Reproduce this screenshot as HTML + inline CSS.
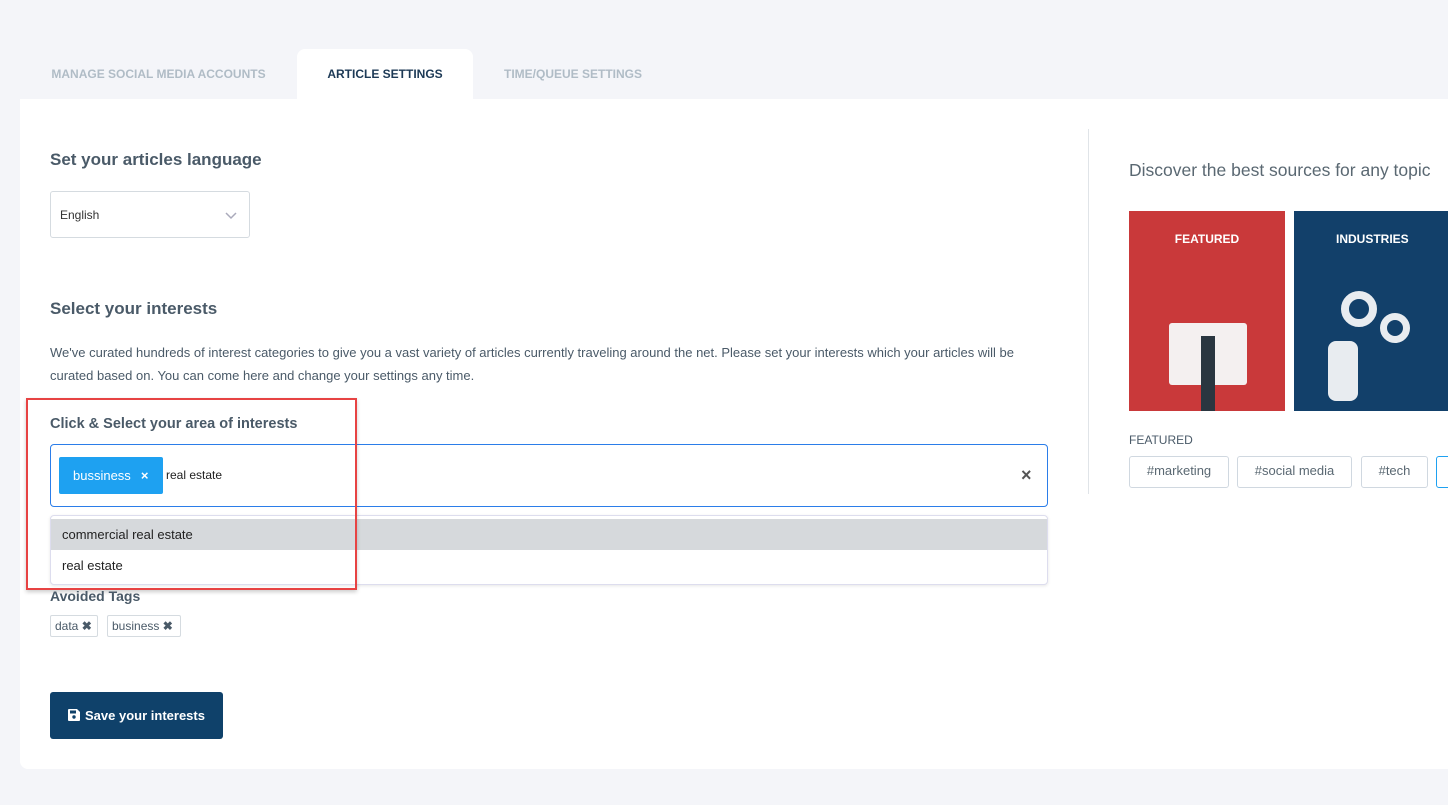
<!DOCTYPE html>
<html><head><style>
body{margin:0;width:1448px;height:805px;background:#f4f5f9;font-family:"Liberation Sans",sans-serif;position:relative;overflow:hidden;color:#4a5a68}
.abs{position:absolute}
.tab{position:absolute;top:49px;height:50px;line-height:50px;font-size:12px;font-weight:bold;text-align:center}
.card{position:absolute;left:20px;top:99px;width:1440px;height:670px;background:#fff;border-radius:0 0 8px 8px}
h3{margin:0;font-size:17px;font-weight:bold;color:#4a5a68;position:absolute}
.tag{position:absolute;top:456px;height:30px;border:1px solid #d0d8e0;border-radius:3px;font-size:13px;color:#5a6872;line-height:28px;text-align:center}
</style></head><body>
<div class="tab" style="left:20px;width:277px;color:#b0bcc6">MANAGE SOCIAL MEDIA ACCOUNTS</div>
<div class="tab" style="left:297px;width:176px;background:#fff;border-radius:8px 8px 0 0;color:#1d3a56">ARTICLE SETTINGS</div>
<div class="tab" style="left:473px;width:200px;color:#b0bcc6">TIME/QUEUE SETTINGS</div>
<div class="card"></div>
<h3 style="left:50px;top:150px">Set your articles language</h3>
<div class="abs" style="left:50px;top:191px;font-size:12px;color:#333;line-height:47px;padding-left:9px;box-sizing:border-box;width:200px;height:47px;border:1px solid #d5dbe0;border-radius:3px">English<svg class="abs" style="left:174px;top:20px" width="12" height="8"><path d="M1 1l5 5 5-5" stroke="#aab" fill="none" stroke-width="1.5"/></svg></div>
<h3 style="left:50px;top:299px">Select your interests</h3>
<div class="abs" style="left:50px;top:341px;width:990px;font-size:13px;line-height:23px;color:#4a5a68">We've curated hundreds of interest categories to give you a vast variety of articles currently traveling around the net. Please set your interests which your articles will be curated based on. You can come here and change your settings any time.</div>
<div class="abs" style="left:50px;top:416px;font-size:14.5px;font-weight:bold">Click &amp; Select your area of interests</div>
<div class="abs" style="left:50px;top:444px;width:998px;height:63px;border:1px solid #2b7de9;border-radius:4px;box-sizing:border-box"></div>
<div class="abs" style="left:59px;top:457px;width:104px;height:37px;background:#1ea1f1;border-radius:2px;color:#fff;font-size:13px;line-height:37px;padding-left:14px;box-sizing:border-box">bussiness<span style="margin-left:10px;font-weight:bold">×</span></div>
<div class="abs" style="left:166px;top:468px;font-size:12px;color:#222">real estate</div>
<div class="abs" style="left:1021px;top:465px;font-size:18px;color:#555;font-weight:bold">×</div>
<div class="abs" style="left:50px;top:515px;width:998px;height:70px;border:1px solid #dde;border-radius:4px;box-sizing:border-box;background:#fff;box-shadow:0 1px 3px rgba(0,0,0,.1)"></div>
<div class="abs" style="left:51px;top:519px;width:996px;height:31px;background:#d6d9dc"></div>
<div class="abs" style="left:62px;top:527px;font-size:13px;color:#222">commercial real estate</div>
<div class="abs" style="left:62px;top:558px;font-size:13px;color:#222">real estate</div>
<div class="abs" style="left:26px;top:398px;width:327px;height:188px;border:2px solid #e74343;box-shadow:0 2px 4px rgba(0,0,0,.2)"></div>
<div class="abs" style="left:50px;top:588px;font-size:14px;font-weight:bold">Avoided Tags</div>
<div class="abs" style="left:50px;top:615px;height:20px;border:1px solid #d5dbe0;border-radius:2px;font-size:12px;line-height:20px;padding:0 5px 0 4px">data <b>✖</b></div>
<div class="abs" style="left:107px;top:615px;height:20px;border:1px solid #d5dbe0;border-radius:2px;font-size:12px;line-height:20px;padding:0 7px 0 4px">business <b>✖</b></div>
<div class="abs" style="left:50px;top:692px;width:173px;height:47px;background:#0f416a;border-radius:3px;color:#fff;font-size:13px;font-weight:bold;line-height:47px;text-align:center"><svg width="12" height="12" viewBox="0 0 12 12" style="vertical-align:-1px;margin-right:5px"><path d="M0 1a1 1 0 0 1 1-1h8l3 3v8a1 1 0 0 1-1 1H1a1 1 0 0 1-1-1z" fill="#fff"/><rect x="2" y="1.5" width="6" height="3" fill="#0f416a"/><circle cx="6" cy="8" r="1.7" fill="#0f416a"/></svg>Save your interests</div>
<div class="abs" style="left:1088px;top:129px;width:1px;height:365px;background:#e0e4e8"></div>
<div class="abs" style="left:1129px;top:160px;font-size:17.5px;color:#5a6872">Discover the best sources for any topic</div>
<div class="abs" style="left:1129px;top:211px;width:156px;height:200px;background:#c9393a;color:#fff;font-size:12px;font-weight:bold;text-align:center;padding-top:21px;box-sizing:border-box">FEATURED
<div class="abs" style="left:40px;top:112px;width:78px;height:62px;background:#f4f0f0;border-radius:3px"></div>
<div class="abs" style="left:72px;top:125px;width:14px;height:75px;background:#2a3640"></div></div>
<div class="abs" style="left:1294px;top:211px;width:160px;height:200px;background:#12406a;color:#fff;font-size:12px;font-weight:bold;text-align:left;padding:21px 0 0 42px;box-sizing:border-box">INDUSTRIES
<div class="abs" style="left:47px;top:80px;width:36px;height:36px;border:8px solid #e8ecf0;border-radius:50%;box-sizing:border-box"></div>
<div class="abs" style="left:86px;top:102px;width:30px;height:30px;border:7px solid #e8ecf0;border-radius:50%;box-sizing:border-box"></div>
<div class="abs" style="left:34px;top:130px;width:30px;height:60px;background:#e8ecf0;border-radius:8px"></div></div>
<div class="abs" style="left:1129px;top:433px;font-size:12px;color:#4a5a68">FEATURED</div>
<div class="tag" style="left:1129px;width:98px">#marketing</div>
<div class="tag" style="left:1237px;width:113px">#social media</div>
<div class="tag" style="left:1361px;width:65px">#tech</div>
<div class="tag" style="left:1436px;width:30px;border-color:#1ea1f1"></div>
</body></html>
